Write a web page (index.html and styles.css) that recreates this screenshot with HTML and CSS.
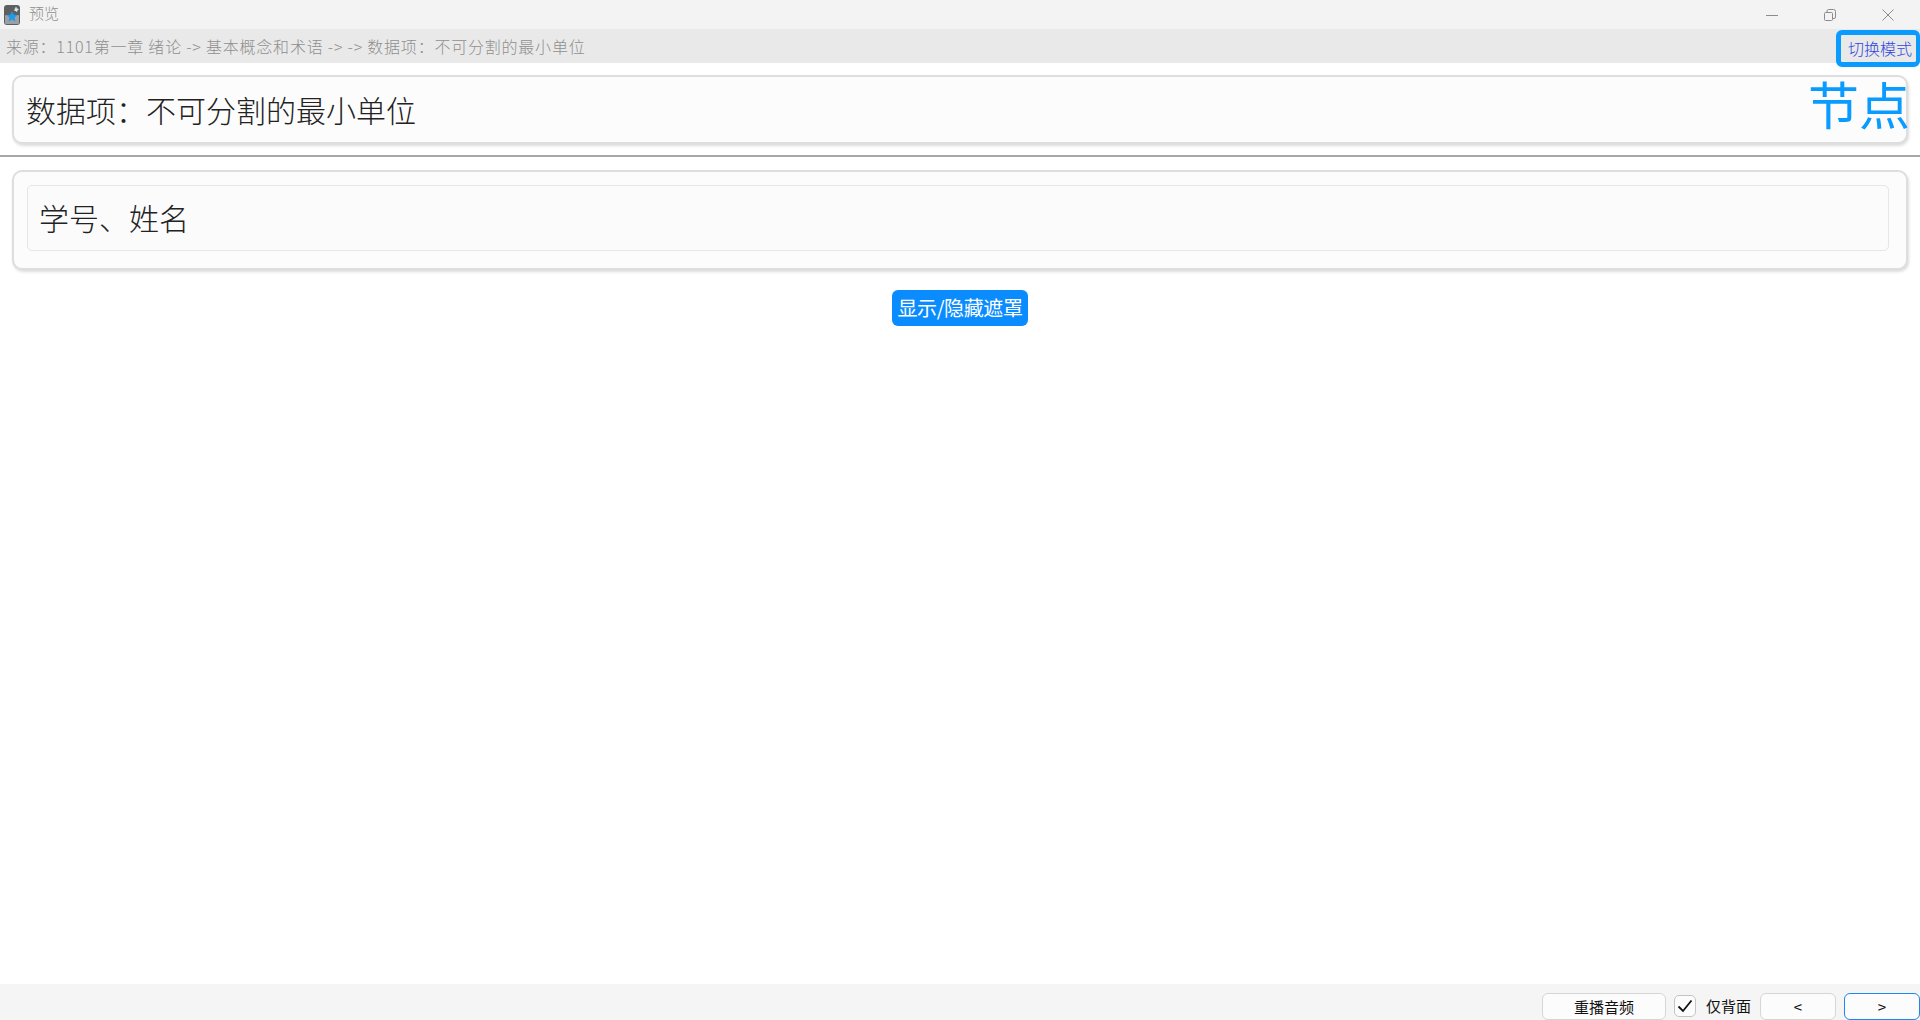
FILE: index.html
```html
<!DOCTYPE html>
<html lang="zh-CN">
<head>
<meta charset="utf-8">
<title>预览</title>
<link rel="stylesheet" href="styles.css">
</head>
<body>
<div class="app">
  <header class="titlebar">
    <div class="title-left">
      <svg class="app-icon" width="16" height="20" viewBox="0 0 16 20">
        <rect x="0" y="0" width="16" height="20" rx="3" fill="#5f5f5f"/>
        <rect x="1" y="10" width="14" height="9" rx="1" fill="#9aa0a5"/>
        <polygon points="8,6 9.500,9.500 13.500,10 10.500,12.500 11.500,16.500 8,14.500 4.500,16.500 5.500,12.500 2.500,10 6.500,9.500" fill="#1e9be8"/>
        <polygon points="12,1.500 13,3.500 15,4 13.500,5.500 13,7 11.500,6 10,5.500 11,3.500" fill="#d5e6f0"/>
      </svg>
      <span class="title-text">预览</span>
    </div>
    <div class="window-controls">
      <svg class="win-btn" width="12" height="12" viewBox="0 0 12 12"><path d="M0 6.500H12" stroke="#8c8c8c" fill="none"/></svg>
      <svg class="win-btn" width="12" height="12" viewBox="0 0 12 12"><path d="M1.500 3.500h6a1 1 0 0 1 1 1v6a1 1 0 0 1-1 1h-6a1 1 0 0 1-1-1v-6a1 1 0 0 1 1-1zM3 3.500V2a1.500 1.500 0 0 1 1.500-1.500H9.500A2 2 0 0 1 11.500 2.500V8A1.500 1.500 0 0 1 10 9.500H8.500" stroke="#8c8c8c" fill="none"/></svg>
      <svg class="win-btn" width="12" height="12" viewBox="0 0 12 12"><path d="M0.500 0.500L11.500 11.500M11.500 0.500L0.500 11.500" stroke="#8c8c8c" fill="none"/></svg>
    </div>
  </header>

  <div class="sourcebar">
    <span class="source-text">来源：1101第一章 绪论 -&gt; 基本概念和术语 -&gt; -&gt; 数据项：不可分割的最小单位</span>
    <button class="mode-btn">切换模式</button>
  </div>

  <main class="content">
    <section class="card question">
      <span class="question-text">数据项：不可分割的最小单位</span>
      <span class="node-label">节点</span>
    </section>
    <hr class="divider">
    <section class="card answer">
      <div class="answer-box">学号、姓名</div>
    </section>
    <div class="mask-row">
      <button class="mask-btn">显示/隐藏遮罩</button>
    </div>
  </main>

  <footer class="footer">
    <button class="foot-btn replay">重播音频</button>
    <label class="back-only">
      <span class="checkbox">
        <svg width="16" height="14" viewBox="0 0 16 14"><path d="M1.500 7.500L6 12L14.500 1.500" stroke="#111" stroke-width="1.800" fill="none"/></svg>
      </span>
      <span>仅背面</span>
    </label>
    <button class="foot-btn nav nav-first">&lt;</button>
    <button class="foot-btn nav focused">&gt;</button>
  </footer>
</div>
</body>
</html>
```
FILE: styles.css
```css
* { box-sizing: border-box; }
html, body { margin: 0; height: 100%; }
body {
  font-family: "Noto Sans CJK SC", "Liberation Sans", sans-serif;
  background: #fff;
  overflow: hidden;
}
button { font-family: inherit; }
.app { display: flex; flex-direction: column; height: 1020px; }

.titlebar {
  height: 29px;
  background: #f3f3f3;
  display: flex;
  justify-content: space-between;
  align-items: center;
}
.title-left { display: flex; align-items: center; padding-left: 4px; }
.app-icon { display: block; }
.title-text { margin-left: 9px; font-size: 15px; color: #8f8f8f; line-height: 20px; margin-top: -3px; font-weight: 300; }
.window-controls { display: flex; gap: 46px; padding-right: 26px; padding-top: 1px; }
.win-btn { display: block; }

.sourcebar {
  height: 34px;
  background: #e9e9e9;
  display: flex;
  justify-content: space-between;
  padding-left: 6px;
  align-items: center;
}
.source-text { font-size: 16px; line-height: 20px; font-weight: 300; letter-spacing: 0.78px; color: #8f8f8f; white-space: nowrap; }
.mode-btn {
  width: 84px;
  height: 37px;
  align-self: flex-start;
  margin-top: 1px;
  padding: 0 0 1px 3px;
  background: #e9e9e9;
  border: 5px solid #0a9bff;
  border-right-width: 4px;
  border-radius: 6px;
  color: #2f45e0;
  font-size: 16px;
  font-weight: 300;
  line-height: 20px;
  white-space: nowrap;
  position: relative;
}

.content { flex: 1; padding: 12px 0 0; min-height: 0; }
.card {
  margin: 0 12px;
  background: #fcfcfc;
  border: 2px solid #dedede;
  border-radius: 10px;
  box-shadow: 1px 2px 3px rgba(0, 0, 0, 0.14);
}
.question {
  height: 69px;
  position: relative;
  display: flex;
  align-items: center;
  padding-left: 12px;
}
.question-text { font-size: 30px; color: #222; font-weight: 300; line-height: 40px; white-space: nowrap; margin-top: -1px; }
.node-label {
  position: absolute;
  right: -4px;
  top: -10px;
  font-size: 51px;
  line-height: 72px;
  color: #0a9bff;
  white-space: nowrap;
}
.divider { margin: 11px 0 13px; border: 0; border-top: 2px solid #a6a6a6; height: 2px; }
.answer { height: 100px; padding: 13px 17px 0 13px; }
.answer-box {
  height: 66px;
  background: #fbfbfb;
  border: 1px solid #e6e6e6;
  border-radius: 5px;
  padding-left: 11px;
  font-size: 30px;
  font-weight: 300;
  color: #222;
  line-height: 62px;
}
.mask-row { display: flex; justify-content: center; padding-top: 20px; }
.mask-btn {
  width: 136px;
  height: 36px;
  padding: 0;
  background: #0a8cff;
  border: 0;
  border-radius: 6px;
  color: #fff;
  font-size: 20px;
  letter-spacing: -0.4px;
  line-height: 36px;
  white-space: nowrap;
}

.footer {
  height: 36px;
  background: #f5f5f5;
  display: flex;
  align-items: flex-start;
  justify-content: flex-end;
  padding-top: 9px;
}
.foot-btn {
  height: 27px;
  background: #fcfcfc;
  border: 1px solid #d6d6d6;
  border-radius: 6px;
  font-size: 15px;
  color: #111;
  padding: 0;
  line-height: 25px;
}
.replay { width: 124px; }
.nav { width: 76px; margin-left: 8px; }
.nav-first { margin-left: 9px; }
.focused { border: 1.500px solid #1f87f0; }
.back-only { display: flex; align-items: center; gap: 10px; margin-left: 8px; font-size: 15px; color: #111; height: 23px; margin-top: 1px; }
.checkbox {
  width: 22px;
  height: 22px;
  background: #fcfcfc;
  border: 1px solid #c4c4c4;
  border-radius: 5px;
  display: flex;
  align-items: center;
  justify-content: center;
}
```
